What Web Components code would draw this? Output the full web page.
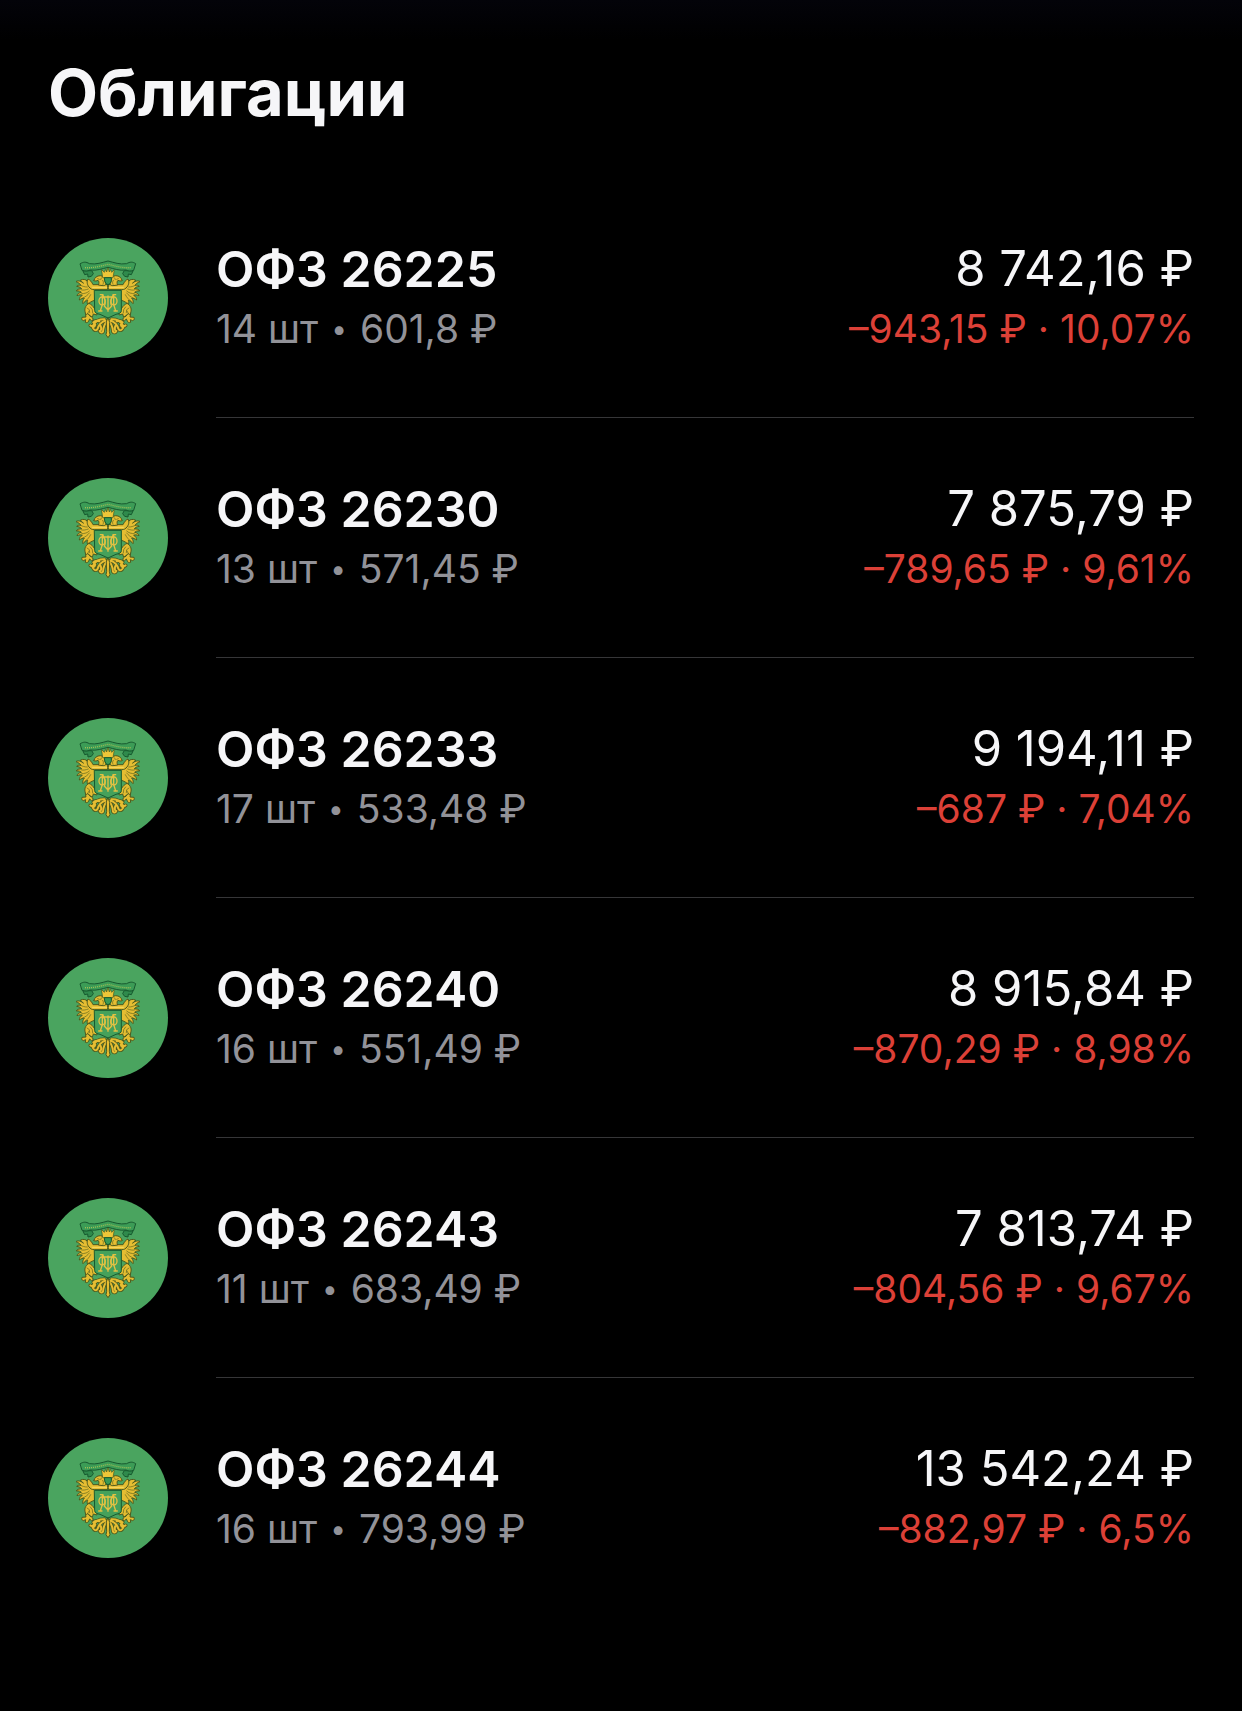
<!DOCTYPE html>
<html lang="ru">
<head>
  <meta charset="utf-8">
  <meta name="viewport" content="width=device-width, initial-scale=1">
  <title>Облигации</title>
  <style>
    body {
      margin: 0;
      min-height: 100vh;
      background: #000 linear-gradient(#030309, #000) top / 100% 40px no-repeat;
      color: #f6f6f8;
      font-family: Inter, "Liberation Sans", sans-serif;
    }
  </style>
</head>
<body>
  <bond-section>
    <span slot="title">Облигации</span>
    <bond-list></bond-list>
  </bond-section>

  <template id="crest">
    <style>
      :host {
        display: block;
        width: 120px;
        height: 120px;
        border-radius: 50%;
        overflow: hidden;
        background: #4aa45f;
      }

      svg {
        display: block;
        width: 100%;
        height: 100%;
      }
    </style>
    <svg viewBox="24 24 360 360" aria-hidden="true" stroke-linejoin="round" stroke-linecap="round">
      <defs>
        <!-- one side of the tail fan -->
        <path id="tail" d="M194 268c-13-1-25 4-32 14-2 6-7 8-11 4M196 272c-12 5-20 12-23 24-2 6-8 6-12 1M201 274c-8 8-11 18-12 31-3 4-8 3-10-2M178 274c-7-3-14-1-18 3M182 288c2 4 2 8 1 12M166 284c-1 5-4 8-8 9"/>

        <!-- left half of the eagle, mirrored for the right one -->
        <g id="half">
          <g fill="#2f8a4c" stroke="#17592f" stroke-width="3">
            <path d="M129 123l5 11 9-2 1 9 10-2 6-8-4-8z"/>
          </g>
          <g fill="#e5bd32" stroke="#4d5a1e" stroke-width="3">
            <path d="M147 169c-2-8-3-15-9-19-7-3-15-2-18 2 5 1 8 4 10 8-7-8-18-9-22-5 8 3 13 7 15 11-6-1-11 0-13 3 8 1 13 4 15 8-7-1-14 1-16 6 7-1 13 1 15 4-7 1-12 5-13 10 6-3 12-3 16-1-6 3-9 8-9 14 5-4 11-6 15-5-4 4-6 10-4 16 4-6 9-9 14-10-2 5-2 10 1 14 3-7 10-11 22-15l3-27z"/>
            <path d="M148 172c-6-5-9-17-4-25 7 3 11 9 15 17h44v15h-40c-7 0-12-2-15-7z"/>
            <path d="M162 151c1-8 9-14 19-14 9 1 14 6 14 13l3 12c-1 4-6 5-9 5l-14-2c3-5 2-12-1-14-4 2-8 3-12 1z"/>
            <path d="M147 220c-9 5-14 14-12 24l3 15 8-5 11 8 3-10 11 3c1-9-3-16-8-20-3-6-8-11-16-15z"/>
            <path d="M143 251c-6 1-7 6-5 10l-12 1c-2 5 0 9 4 10l7-3-1 8c5 2 9 0 10-4l3-6 5 5 5-1c2-6-3-10-8-12z"/>
          </g>
          <g fill="none" stroke="#5c651f" stroke-width="2">
            <path d="M122 166c6 3 12 5 20 5M125 180c6 1 12 0 20-3M125 191c9 0 17-2 23-8M128 204c8-3 15-8 20-15M136 213c6-4 12-11 16-19"/>
            <path d="M173 146l5 2M184 144l-2 5M188 151c3 4 3 8 1 12M141 234l7 5 1 9M151 231l6 8 1 10M147 243l-4 7"/>
          </g>
          <path d="M158 172h42" fill="none" stroke="#f4d55c" stroke-width="4"/>
          <use href="#tail" fill="none" stroke="#4d5a1e" stroke-width="11"/>
          <use href="#tail" fill="none" stroke="#e5bd32" stroke-width="6"/>
        </g>
      </defs>

      <use href="#half"/>
      <use href="#half" transform="matrix(-1 0 0 1 408 0)"/>

      <path d="M204 263l5 14-1 27 2 10-6 9-6-9 2-10-1-27z" fill="#e5bd32" stroke="#4d5a1e" stroke-width="3"/>

      <!-- ribbon over the crown -->
      <path d="M121 101c9-6 17-6 27 0 22 3 36-3 56-8 20 5 34 11 56 8 10-6 18-6 27 0l-6 20c-9 3-15 3-23-1-20 3-36-4-54-8-18 4-34 11-54 8-8 4-14 4-23 1z" fill="#3c9c56" stroke="#17592f" stroke-width="3"/>
      <path d="M135 113c24 2 46-5 69-10 23 5 45 12 69 10" fill="none" stroke="#a0bd55" stroke-width="4" stroke-dasharray="3 3" stroke-linecap="butt"/>

      <path d="M185 119l8 8 4-9 3 8 4-13 4 13 3-8 4 9 8-8-4 24h-30z" fill="#edc638" stroke="#4d5a1e" stroke-width="2"/>
      <path d="M194 143h20v9c-1 7-5 10-10 12-5-2-9-5-10-12z" fill="#3b9954" stroke="#17592f" stroke-width="3"/>

      <!-- shield with the monogram -->
      <path d="M164 181h80v61c0 7-7 9-16 11l-24 11-24-11c-9-2-16-4-16-11z" fill="#45a15b" stroke="#17592f" stroke-width="3"/>
      <g fill="none" stroke="#e3c142" stroke-width="4">
        <ellipse cx="186" cy="213" rx="9" ry="12"/>
        <ellipse cx="222" cy="213" rx="9" ry="12"/>
        <path d="M187 194v30l-6 18M221 194v30l6 18M176 243h10M222 243h10M181 194h8M219 194h8"/>
        <path d="M204 198v46M193 201h22M189 196c8 12 8 24 4 32l11 12 11-12c-4-8-4-20 4-32"/>
      </g>
    </svg>
  </template>

  <script>
    const bonds = [
      { name: 'ОФЗ 26225', count: 14, price: '601,8', total: '8 742,16', loss: '943,15', percent: '10,07' },
      { name: 'ОФЗ 26230', count: 13, price: '571,45', total: '7 875,79', loss: '789,65', percent: '9,61' },
      { name: 'ОФЗ 26233', count: 17, price: '533,48', total: '9 194,11', loss: '687', percent: '7,04' },
      { name: 'ОФЗ 26240', count: 16, price: '551,49', total: '8 915,84', loss: '870,29', percent: '8,98' },
      { name: 'ОФЗ 26243', count: 11, price: '683,49', total: '7 813,74', loss: '804,56', percent: '9,67' },
      { name: 'ОФЗ 26244', count: 16, price: '793,99', total: '13 542,24', loss: '882,97', percent: '6,5' },
    ];

    class BondCrest extends HTMLElement {
      constructor() {
        super();
        this.shadowDOM = this.attachShadow({ mode: 'open' });
        this.shadowDOM.appendChild(document.getElementById('crest').content.cloneNode(true));
      }
    }

    class BondItem extends HTMLElement {
      constructor() {
        super();
        this.shadowDOM = this.attachShadow({ mode: 'open' });
      }

      set bond(bond) {
        this._bond = bond;
        this.render();
      }

      render() {
        const { name, count, price, total, loss, percent } = this._bond;
        this.shadowDOM.innerHTML = `
          <style>
            :host {
              display: flex;
              gap: 48px;
            }

            bond-crest {
              flex: none;
              margin: 60px 0;
            }

            .row {
              flex: 1;
              display: flex;
              justify-content: space-between;
              gap: 24px;
              box-sizing: border-box;
              padding-top: 61px;
              border-bottom: 1px solid #363638;
            }

            :host(:last-child) .row {
              border-bottom: none;
            }

            h2, p {
              margin: 0;
              line-height: 60px;
              white-space: nowrap;
            }

            h2 {
              font-size: 50px;
              font-weight: 600;
            }

            .total {
              font-size: 49px;
            }

            .details, .change {
              font-size: 39px;
            }

            .details {
              color: #929298;
            }

            .dot {
              margin: 0 2px;
              font-size: 28px;
              line-height: 1;
              vertical-align: 4px;
            }

            .value {
              text-align: right;
            }

            .change {
              color: #dc4037;
            }
          </style>
          <bond-crest></bond-crest>
          <div class="row">
            <div>
              <h2>${name}</h2>
              <p class="details">${count} шт <span class="dot">•</span> ${price} ₽</p>
            </div>
            <div class="value">
              <p class="total">${total} ₽</p>
              <p class="change">–${loss} ₽ · ${percent}%</p>
            </div>
          </div>`;
      }
    }

    class BondList extends HTMLElement {
      constructor() {
        super();
        this.shadowDOM = this.attachShadow({ mode: 'open' });
      }

      set bonds(bonds) {
        this._bonds = bonds;
        this.render();
      }

      render() {
        this.shadowDOM.innerHTML = `
          <style>
            :host {
              display: block;
            }
          </style>`;
        this._bonds.forEach(bond => {
          const bondItemElement = document.createElement('bond-item');
          bondItemElement.bond = bond;
          this.shadowDOM.appendChild(bondItemElement);
        });
      }
    }

    class BondSection extends HTMLElement {
      constructor() {
        super();
        this.shadowDOM = this.attachShadow({ mode: 'open' });
        this.shadowDOM.innerHTML = `
          <style>
            :host {
              display: block;
              padding: 53px 48px 60px;
            }

            h1 {
              margin: 0 0 45px;
              font-size: 65px;
              font-weight: 700;
              line-height: 80px;
            }
          </style>
          <h1><slot name="title"></slot></h1>
          <slot></slot>`;
      }
    }

    customElements.define('bond-crest', BondCrest);
    customElements.define('bond-item', BondItem);
    customElements.define('bond-list', BondList);
    customElements.define('bond-section', BondSection);

    document.querySelector('bond-list').bonds = bonds;
  </script>
</body>
</html>
